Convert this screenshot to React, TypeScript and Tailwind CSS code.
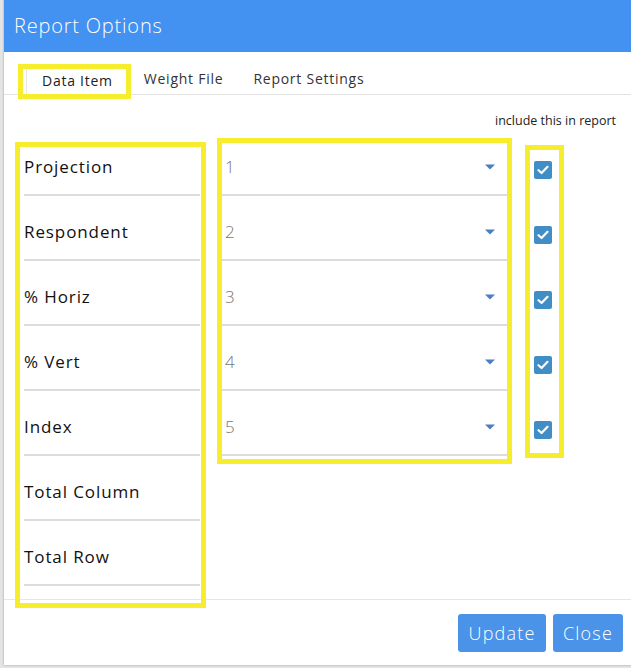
import React from "react";

const labels = ["Projection", "Respondent", "% Horiz", "% Vert", "Index", "Total Column", "Total Row"];
const values = ["1", "2", "3", "4", "5"];

function Caret() {
  return (
    <svg width="10" height="6" viewBox="0 0 10 6" className="shrink-0">
      <path d="M0 0.5 L10 0.5 L5 5.5 Z" fill="#4a7fc4" />
    </svg>
  );
}

function Check() {
  return (
    <div className="w-[18px] h-[18px] rounded-[2px] bg-[#418dc6] flex items-center justify-center">
      <svg width="12" height="10" viewBox="0 0 12 10">
        <path d="M1.5 5.2 L4.6 8 L10.5 1.8" stroke="white" strokeWidth="2.2" fill="none" strokeLinecap="round" strokeLinejoin="round" />
      </svg>
    </div>
  );
}

export default function App() {
  const font = { fontFamily: '"Open Sans", "Noto Sans", sans-serif' };
  return (
    <div className="relative w-[631px] h-[668px] bg-[#e4e4e4] overflow-hidden" style={font}>
      <div className="ml-[4px] w-[627px] h-[665px] bg-white flex flex-col shadow-[0_0_2px_rgba(0,0,0,0.35)]">
        <div className="h-[52px] bg-[#4391f0] flex items-center pl-[10px]">
          <span className="text-white text-[20px] font-light tracking-[0.8px]">Report Options</span>
        </div>
        <div className="h-[43px] border-b border-[#e2e2e2] flex items-end pl-[22px] text-[14px] text-[#333] tracking-[0.75px]">
          <div className="h-[31px] px-[15px] bg-white border border-b-0 border-[#e6e6e6] flex items-center -mb-px text-[#222]">Data Item</div>
          <div className="h-[31px] px-[15px] flex items-center">Weight File</div>
          <div className="h-[31px] px-[15px] flex items-center">Report Settings</div>
        </div>
        <div className="flex-1 flex flex-col pt-[16px]">
          <div className="h-[20px] flex items-center justify-end pr-[15px] text-[12.5px] text-[#222]">include this in report</div>
          <div className="flex pl-[20px]">
            <div className="w-[176px] flex flex-col">
              {labels.map((l) => (
                <div key={l} className="h-[65px] border-b-2 border-[#dcdcdc] flex items-center pt-[8px] text-[17px] text-[#111] tracking-[0.9px]">
                  {l}
                </div>
              ))}
            </div>
            <div className="ml-[22px] w-[285px] flex flex-col">
              {values.map((v) => (
                <div key={v} className="h-[65px] border-b-2 border-[#dcdcdc] flex items-center justify-between pt-[8px] pl-[3px] pr-[12px] text-[17px] text-[#777] font-light">
                  <span>{v}</span>
                  <Caret />
                </div>
              ))}
            </div>
            <div className="ml-[27px] flex flex-col">
              {values.map((v) => (
                <div key={v} className="h-[65px] flex items-center pt-[13px]">
                  <Check />
                </div>
              ))}
            </div>
          </div>
        </div>
        <div className="h-[66px] border-t border-[#e6e6e6] flex items-start justify-end gap-[7px] pt-[14px] pr-[8px]">
          <button className="h-[38px] w-[88px] rounded-[3px] bg-[#4a93e8] text-white text-[18px] font-light tracking-[1.2px]">Update</button>
          <button className="h-[38px] w-[70px] rounded-[3px] bg-[#4a93e8] text-white text-[18px] font-light tracking-[1.2px]">Close</button>
        </div>
      </div>
      {/* annotation highlight overlays */}
      <div className="absolute left-[18px] top-[64px] w-[113px] h-[35px] border-[5px] border-[#f6ee2c]" />
      <div className="absolute left-[15px] top-[142px] w-[191px] h-[466px] border-[5px] border-[#f6ee2c]" />
      <div className="absolute left-[217px] top-[138px] w-[295px] h-[326px] border-[5px] border-[#f6ee2c]" />
      <div className="absolute left-[525px] top-[145px] w-[39px] h-[313px] border-[5px] border-[#f6ee2c]" />
    </div>
  );
}
